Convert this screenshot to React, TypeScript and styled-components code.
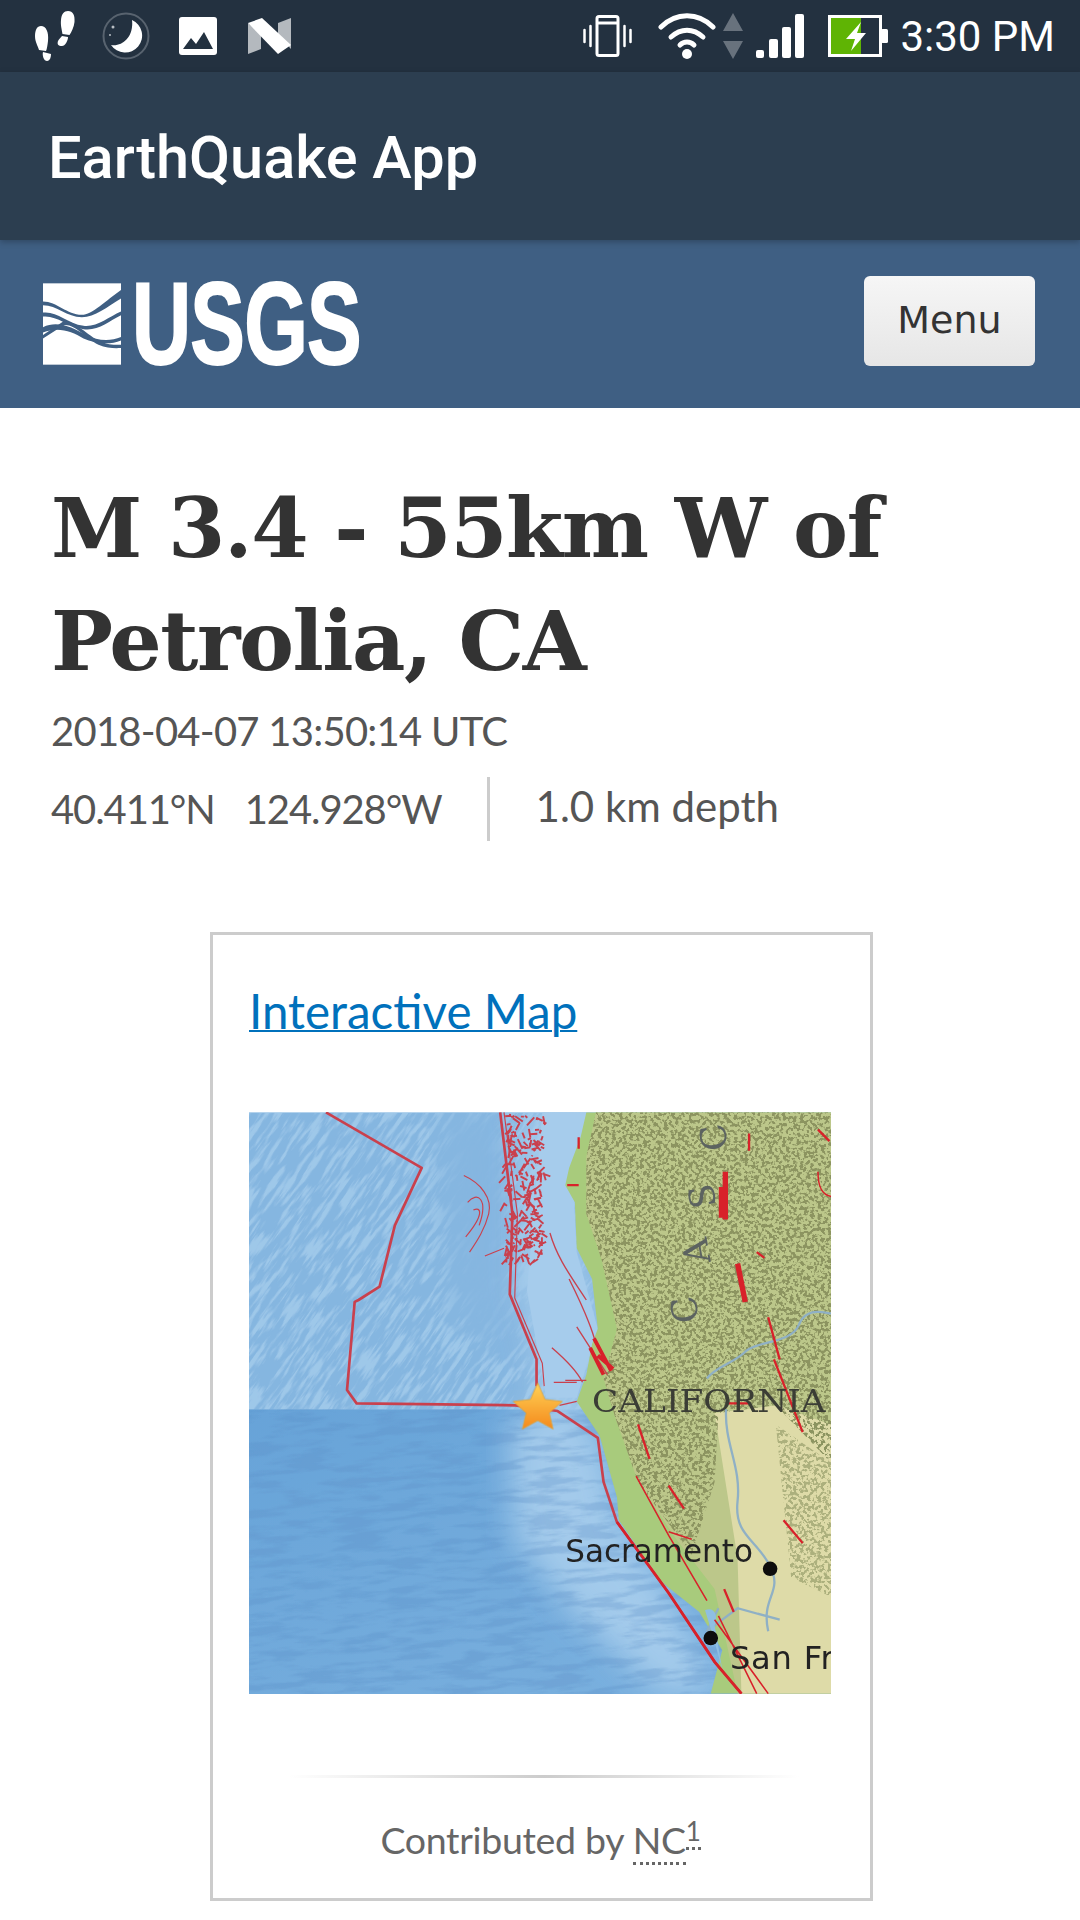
import React from "react";
import styled, { createGlobalStyle } from "styled-components";

const Global = createGlobalStyle`
  html, body { margin: 0; padding: 0; background: #fff; }
  #root { width: 1080px; height: 1920px; overflow: hidden; }
`;

const Page = styled.div`
  width: 1080px;
  height: 1920px;
  display: flex;
  flex-direction: column;
  background: #fff;
  font-family: Lato, "Noto Sans", sans-serif;
`;

const StatusBar = styled.div`
  height: 72px;
  flex: none;
  background: #233140;
  display: flex;
  align-items: center;
  padding: 0 25px 0 35px;
  box-sizing: border-box;
`;
const StatusGroup = styled.div`
  display: flex;
  align-items: center;
`;
const IconSlot = styled.span<{ $ml: number }>`
  display: flex;
  margin-left: ${(p) => p.$ml}px;
`;
const Spacer = styled.div`
  flex: 1;
`;
const Clock = styled.span`
  font-family: Roboto, sans-serif;
  font-size: 42px;
  color: #fff;
  margin-left: 12px;
  line-height: 72px;
  padding-top: 2px;
`;
const AppBar = styled.div`
  height: 168px;
  flex: none;
  background: #2c3e50;
  display: flex;
  align-items: center;
  padding: 3px 0 0 48px;
  box-sizing: border-box;
  position: relative;
  z-index: 1;
  box-shadow: 0 2px 6px rgba(0, 0, 0, 0.25);
`;
const AppTitle = styled.h2`
  margin: 0;
  font-family: Roboto, sans-serif;
  font-weight: 500;
  font-size: 59.500px;
  color: #fff;
`;
const SiteHeader = styled.header`
  height: 168px;
  flex: none;
  background: #3f5f83;
  display: flex;
  align-items: center;
  justify-content: space-between;
  padding: 0 45px 0 43px;
  box-sizing: border-box;
`;
const Logo = styled.div`
  display: flex;
  align-items: center;
  gap: 11px;
`;
const LogoWord = styled.span`
  display: block;
  width: 225px;
  height: 84px;
  line-height: 84px;
  font-family: "Liberation Sans", Arial, sans-serif;
  font-weight: 700;
  font-size: 116px;
  color: #fff;
  -webkit-text-stroke: 2px #fff;
  letter-spacing: -1px;
  white-space: nowrap;
  transform: scaleX(0.705);
  transform-origin: left center;
`;
const MenuButton = styled.button`
  width: 171px;
  height: 90px;
  margin-top: -6px;
  padding: 0 0 3px;
  border: 0;
  border-radius: 6px;
  background: linear-gradient(#f6f6f6, #e6e6e6);
  color: #333;
  font-family: "DejaVu Sans", sans-serif;
  font-size: 38px;
`;
const Main = styled.main`
  flex: 1;
  padding: 64px 0 0 51px;
  min-height: 0;
`;
const Title = styled.h1`
  margin: 0;
  width: 1000px;
  font-family: "DejaVu Serif", serif;
  font-weight: 700;
  font-size: 82.500px;
  line-height: 113px;
  color: #333;
  letter-spacing: -1.500px;
`;
const DateLine = styled.div`
  margin-top: 3px;
  font-size: 40px;
  letter-spacing: -0.750px;
  line-height: 60px;
  color: #555;
`;
const Meta = styled.div`
  margin-top: 16px;
  height: 64px;
  display: flex;
  align-items: center;
  font-size: 40px;
  letter-spacing: -1.100px;
  color: #555;
`;
const Coord = styled.span`
  margin-right: 30px;
  line-height: 58px;
`;
const Depth = styled.span`
  border-left: 3px solid #ccc;
  height: 64px;
  font-size: 42px;
  letter-spacing: 0;
  line-height: 58px;
  margin-left: 15px;
  padding-left: 46px;
`;
const Card = styled.section`
  margin: 91px 0 0 159px;
  width: 663px;
  height: 969px;
  box-sizing: border-box;
  border: 3px solid #ccc;
  padding: 44px 0 0 36px;
`;
const MapLink = styled.a`
  display: block;
  font-size: 47.500px;
  line-height: 64px;
  color: #0071bc;
  text-decoration: underline;
  text-decoration-thickness: 2px;
`;
const MapFrame = styled.div`
  margin: 69px 0 0 0;
  width: 582px;
  height: 582px;
  overflow: hidden;
`;
const Rule = styled.div`
  margin: 81px 0 0 40px;
  width: 510px;
  height: 3px;
  background: linear-gradient(90deg, #fff, #ccc 50%, #fff);
`;
const Contributed = styled.div`
  margin: 38px 0 0 0;
  width: 583px;
  text-align: center;
  font-size: 37.500px;
  letter-spacing: -0.300px;
  line-height: 48px;
  color: #666;
`;
const Abbr = styled.span`
  border-bottom: 3px dotted #666;
`;
const Sup = styled.sup`
  font-size: 26px;
  line-height: 0;
  border-bottom: 3px dotted #666;
`;

const Foot = () => (
  <svg width="40" height="52" viewBox="35 10 40 52" fill="#fff">
    <path d="M41 26c5 0 8 6 7 15-.5 4-1 8-2 10l-7-1c-1-4-4-8-4-14 0-6 2-10 6-10z" />
    <path d="M43 52l8 2c0 3-1 7-4 7s-5-5-4-9z" />
    <path d="M68 11c5 0 7 4 6.500 11-.5 5-3 10-5 13l-7-1c-1-6-2-9-1.500-14 .5-6 3-9 7-9z" />
    <path d="M62 36l6 1c0 4-3 9-6 9-4 0-5-2-4-5 1-2 3-4 4-5z" />
  </svg>
);
const MoonIcon = () => (
  <svg width="48" height="48" viewBox="0 0 48 48">
    <circle cx="24" cy="24" r="22.500" fill="none" stroke="#58636f" strokeWidth="2" />
    <path d="M30 8a17 17 0 1 1-21 25c12 2 23-9 21-25z" fill="#fff" />
    <circle cx="11" cy="15" r="1.500" fill="#b9bec4" />
    <circle cx="8" cy="23" r="1" fill="#b9bec4" />
  </svg>
);
const ImageIcon = () => (
  <svg width="38" height="38" viewBox="0 0 38 38">
    <rect width="38" height="38" rx="3" fill="#fff" />
    <path d="M4 32l8-11 5 6 8-12 9 17z" fill="#233140" />
  </svg>
);
const NIcon = () => (
  <svg width="43" height="36" viewBox="0 0 43 36">
    <path d="M0 5v31l13-5V16z" fill="#b4b9be" />
    <path d="M30 5l13-5v31l-13-14z" fill="#b4b9be" />
    <path d="M0 5L14 0l29 27-13 9z" fill="#fff" />
  </svg>
);
const VibrateIcon = () => (
  <svg width="49" height="42" viewBox="0 0 49 42" fill="none" stroke="#fff">
    <rect x="14" y="1.500" width="21" height="39" rx="2" strokeWidth="3" />
    <path d="M15 8h19" strokeWidth="3" />
    <path d="M7.500 11v20M1.500 15v12M41.500 11v20M47.500 15v12" strokeWidth="2.500" strokeLinecap="round" />
  </svg>
);
const WifiIcon = () => (
  <svg width="58" height="48" viewBox="0 0 58 48" fill="none" stroke="#fff" strokeWidth="5" strokeLinecap="round">
    <path d="M3 15C18 0 40 0 55 15" />
    <path d="M13 25c10-9 22-9 32 0" />
    <path d="M22 33c4-4 10-4 14 0" />
    <circle cx="29" cy="42" r="5" fill="#fff" stroke="none" />
  </svg>
);
const ArrowsIcon = () => (
  <svg width="20" height="46" viewBox="0 0 20 46" fill="#68727d">
    <path d="M10 0l10 18H0zM0 28h20L10 46z" />
  </svg>
);
const SignalIcon = () => (
  <svg width="48" height="44" viewBox="0 0 48 44" fill="#fff">
    <rect x="0" y="36" width="8" height="8" rx="2" />
    <rect x="13" y="25" width="9" height="19" rx="2" />
    <rect x="26" y="13" width="9" height="31" rx="2" />
    <rect x="39" y="0" width="9" height="44" rx="2" />
  </svg>
);
const BatteryIcon = () => (
  <svg width="60" height="42" viewBox="0 0 60 42">
    <rect x="1.500" y="1.500" width="51" height="39" fill="none" stroke="#fff" strokeWidth="3" />
    <rect x="3" y="3" width="30" height="36" fill="#5fb404" />
    <rect x="53" y="14" width="7" height="14" rx="1.500" fill="#fff" />
    <path d="M33 7L18 24h9l-4 12 15-18h-9z" fill="#fff" />
  </svg>
);

const LogoMark = () => (
  <svg width="78" height="82" viewBox="128 160 235 245">
    <rect x="128" y="160" width="235" height="245" fill="#fff" />
    <g fill="#3f5f83">
      <path d="M128 215C170 215 200 255 245 255 275 255 320 210 363 180V206C320 232 285 262 245 262 200 262 170 226 128 226Z" />
      <path d="M128 248C170 243 200 280 250 288 290 293 325 262 363 245V256C325 274 295 304 250 298 200 290 170 256 128 260Z" />
      <path d="M128 292C170 272 215 290 260 318 290 332 330 336 363 322V332C330 346 285 342 250 326 215 305 175 290 128 308Z" />
      <path d="M128 326L190 286C225 282 255 325 295 345 320 356 345 356 363 355V345C345 346 320 344 300 335 260 315 225 272 190 274L128 316Z" />
    </g>
  </svg>
);

// deterministic fault-line segments for the dense offshore network
const faultNet = (() => {
  let s = 37;
  const r = (n: number) => {
    s = (s * 16807) % 2147483647;
    return ((s % 1000) / 1000) * n;
  };
  const out: string[] = [];
  for (let i = 0; i < 240; i += 1) {
    const y = 38 + r(385);
    const x = 690 + r(100) + (y < 200 ? 6 : 0);
    out.push(`M${x.toFixed(0)} ${y.toFixed(0)}l${(r(40) - 20).toFixed(0)} ${(r(34) - 8).toFixed(0)}`);
  }
  return out.join("");
})();

const QuakeMap = () => (
  <svg width="582" height="582" viewBox="24 35 1520 1518">
    <defs>
      <clipPath id="upperOcean">
        <rect x="24" y="35" width="900" height="775" />
      </clipPath>
      <clipPath id="lowerOcean">
        <rect x="24" y="810" width="1300" height="745" />
      </clipPath>
      <linearGradient id="oceanLow" x1="0" y1="0" x2="1" y2="1">
        <stop offset="0" stopColor="#67a3d8" />
        <stop offset="1" stopColor="#7db2df" />
      </linearGradient>
      <linearGradient id="starFill" x1="0" y1="0" x2="0" y2="1">
        <stop offset="0" stopColor="#ffd257" />
        <stop offset="1" stopColor="#f58a1c" />
      </linearGradient>
      <filter id="soft" x="0" y="0" width="100%" height="100%">
        <feGaussianBlur stdDeviation="1.800" />
      </filter>
      <filter id="shelfBlur" x="-10%" y="-10%" width="120%" height="120%">
        <feGaussianBlur stdDeviation="40" />
      </filter>
      <filter id="ridges" x="0" y="0" width="100%" height="100%" colorInterpolationFilters="sRGB">
        <feTurbulence type="fractalNoise" baseFrequency="0.012 0.085" numOctaves="3" seed="4" />
        <feColorMatrix values="0 0 0 0 .72 0 0 0 0 .85 0 0 0 0 .95 6 0 0 0 -2.800" />
        <feComposite in2="SourceAlpha" operator="in" />
      </filter>
      <filter id="deep" x="0" y="0" width="100%" height="100%" colorInterpolationFilters="sRGB">
        <feTurbulence type="fractalNoise" baseFrequency="0.008 0.05" numOctaves="4" seed="9" />
        <feColorMatrix values="0 0 0 0 .36 0 0 0 0 .56 0 0 0 0 .78 5 0 0 0 -2.300" />
        <feComposite in2="SourceAlpha" operator="in" />
      </filter>
      <filter id="speckle" x="0" y="0" width="100%" height="100%" colorInterpolationFilters="sRGB">
        <feTurbulence type="fractalNoise" baseFrequency="0.11" numOctaves="2" seed="7" />
        <feColorMatrix values="0 0 0 0 .55 0 0 0 0 .58 0 0 0 0 .38 12 0 0 0 -5.800" />
        <feComposite in2="SourceAlpha" operator="in" />
      </filter>
    </defs>
    <g filter="url(#soft)">
      <rect x="24" y="35" width="1520" height="775" fill="#85b6e0" />
      <rect x="24" y="810" width="1520" height="745" fill="url(#oceanLow)" />
      <g clipPath="url(#upperOcean)">
        <rect x="-500" y="-300" width="1600" height="1600" transform="rotate(-55 400 400)" fill="#000" filter="url(#ridges)" opacity="0.5" />
        <path d="M520 35H690L720 300 705 510 770 690 560 560Z" fill="#85b6e0" filter="url(#shelfBlur)" />
      </g>
      <path d="M735 35H920L870 220 880 400 935 600 880 790 950 900 990 1100 1100 1260 1250 1553H1100L880 1350 720 1150 700 850 790 810 770 650 735 500Z" fill="#a6ccec" filter="url(#shelfBlur)" opacity="0.95" />
      <path d="M790 35H920L870 220 880 400 935 600 880 780H800L750 500Z" fill="#a6ccec" />
      <g clipPath="url(#lowerOcean)">
        <rect x="-300" y="500" width="1800" height="1300" transform="rotate(-4 700 1100)" fill="#000" filter="url(#deep)" opacity="0.3" />
      </g>
      <path d="M905 35L890 100 860 180 850 225 875 270 880 390 920 470 935 600 920 640 905 720 880 790 940 880 985 1040 990 1100 1100 1260 1200 1340 1260 1440 1230 1553H1544V35Z" fill="#a8cb7b" />
      <path d="M930 35L905 150 905 300 945 420 985 600 950 730 980 830 1040 1000 1140 1150 1240 1280 1300 1553H1544V35Z" fill="#bcc78a" />
      <path d="M1240 820L1400 800 1544 850V1553H1310L1300 1200Z" fill="#dedba8" />
      <path d="M930 35L905 150 905 300 945 420 985 600 950 730 980 830 1040 1000 1180 1190 1240 1000 1250 820 1400 800 1544 950 1544 35Z" fill="#000" filter="url(#speckle)" />
      <path d="M1400 850L1544 950V1300L1440 1250Z" fill="#000" filter="url(#speckle)" opacity="0.6" />
      <path d="M1220 730C1240 700 1290 690 1320 660S1440 640 1460 590 1530 560 1544 560M1270 810C1265 900 1310 960 1300 1050S1350 1150 1385 1220 1360 1300 1380 1390M1250 1330L1220 1390 1300 1330 1410 1360" fill="none" stroke="#8fb0c5" strokeWidth="6" />
      <path d="M1215 1335C1240 1325 1250 1350 1240 1375L1260 1490 1235 1400Z" fill="#8fbfe2" />
      <g fill="none" stroke="#c9414e" strokeLinejoin="round">
        <path d="M225 35L475 180 405 330 365 490 310 525 300 530 280 760 305 795 720 800 830 815 935 885 950 1000 985 1105 1120 1290 1240 1470 1310 1553" strokeWidth="7" />
        <path d="M680 35L712 300 705 510 775 680 775 750" strokeWidth="7" />
        <path d="M690 35L725 300 718 520 790 690 795 750" strokeWidth="3" />
        <path d={faultNet} strokeWidth="5" />
        <path d="M585 200C630 220 660 260 650 300S620 370 600 400M595 270C620 240 650 260 625 330M610 290C630 280 640 300 590 360M640 410L690 390" strokeWidth="3" />
        <path d="M810 350C830 420 870 470 905 525M860 470C890 530 920 600 930 640M880 595L960 720M815 650C850 680 880 710 895 740M850 735L905 735M820 740H880M835 800L880 790" strokeWidth="3.500" />
      </g>
      <g fill="none" stroke="#d8202a">
        <path d="M925 625L970 710M915 650L950 720M935 670L975 705" strokeWidth="10" />
        <path d="M1268 190V315M1258 230V310M1300 430L1320 530" strokeWidth="14" />
        <path d="M885 100V130M855 225H885M1040 850L1070 940M1120 1010L1160 1070M1380 570L1410 680M1420 1100L1470 1160M1265 1280L1290 1340M1275 795H1330M1395 680L1470 870M1510 80L1540 110M1330 90V135M1350 400L1370 415" strokeWidth="6" />
        <path d="M1035 985L1120 1140 1220 1310M1240 1360L1380 1553M1250 1350L1350 1553M1120 1130L1180 1150M1510 190C1510 230 1520 250 1544 255" strokeWidth="4" />
        <path d="M985 1105L1120 1290 1240 1470 1310 1553" strokeWidth="7" />
      </g>
      <circle cx="1385" cy="1227" r="19" fill="#0a0a0a" />
      <circle cx="1230" cy="1408" r="19" fill="#0a0a0a" />
      <g fill="#5c6361" fontFamily="'DejaVu Serif', serif" fontSize="92">
        <text x="1205" y="130" transform="rotate(-100 1240 100)">C</text>
        <text x="1180" y="285" transform="rotate(-100 1210 255)">S</text>
        <text x="1165" y="430" transform="rotate(-100 1195 400)">A</text>
        <text x="1135" y="585" transform="rotate(-100 1165 555)">C</text>
      </g>
      <text x="920" y="818" fill="#3a3d36" fontFamily="'DejaVu Serif', serif" fontSize="84" textLength="610" lengthAdjust="spacingAndGlyphs">CALIFORNIA</text>
      <text x="850" y="1210" fill="#222" fontFamily="'DejaVu Sans', sans-serif" fontSize="84" textLength="490" lengthAdjust="spacingAndGlyphs">Sacramento</text>
      <text x="1280" y="1490" fill="#222" fontFamily="'DejaVu Sans', sans-serif" fontSize="84" letterSpacing="2">San Fr</text>
    </g>
    <path d="M778 742L797 785 842 790 808 820 818 862 778 840 738 862 748 820 714 790 759 785Z" fill="url(#starFill)" stroke="#e0a030" strokeWidth="2" />
  </svg>
);

export default function App() {
  return (
    <Page>
      <Global />
      <StatusBar>
        <StatusGroup>
          <Foot />
          <IconSlot $ml={27}>
            <MoonIcon />
          </IconSlot>
          <IconSlot $ml={29}>
            <ImageIcon />
          </IconSlot>
          <IconSlot $ml={31}>
            <NIcon />
          </IconSlot>
        </StatusGroup>
        <Spacer />
        <StatusGroup>
          <VibrateIcon />
          <IconSlot $ml={26}>
            <WifiIcon />
          </IconSlot>
          <IconSlot $ml={7}>
            <ArrowsIcon />
          </IconSlot>
          <IconSlot $ml={13}>
            <SignalIcon />
          </IconSlot>
          <IconSlot $ml={24}>
            <BatteryIcon />
          </IconSlot>
          <Clock>3:30 PM</Clock>
        </StatusGroup>
      </StatusBar>
      <AppBar>
        <AppTitle>EarthQuake App</AppTitle>
      </AppBar>
      <SiteHeader>
        <Logo>
          <LogoMark />
          <LogoWord>USGS</LogoWord>
        </Logo>
        <MenuButton>Menu</MenuButton>
      </SiteHeader>
      <Main>
        <Title>
          M 3.4 - 55km W of
          <br />
          Petrolia, CA
        </Title>
        <DateLine>2018-04-07 13:50:14 UTC</DateLine>
        <Meta>
          <Coord>40.411°N</Coord>
          <Coord>124.928°W</Coord>
          <Depth>1.0 km depth</Depth>
        </Meta>
        <Card>
          <MapLink href="#">Interactive Map</MapLink>
          <MapFrame>
            <QuakeMap />
          </MapFrame>
          <Rule />
          <Contributed>
            Contributed by <Abbr>NC</Abbr>
            <Sup>1</Sup>
          </Contributed>
        </Card>
      </Main>
    </Page>
  );
}
